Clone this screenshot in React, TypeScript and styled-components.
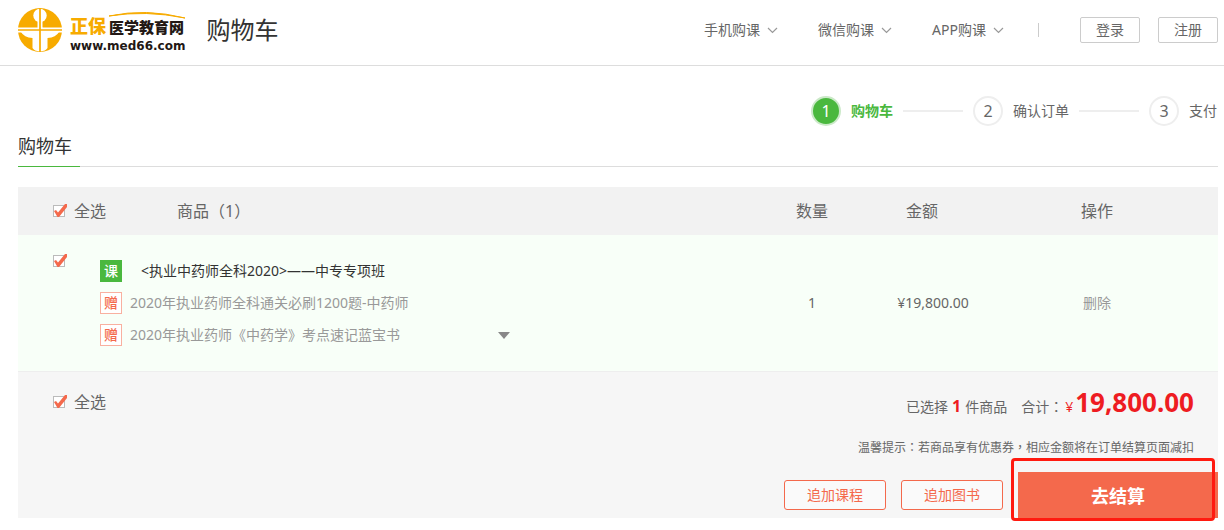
import React from "react";
import styled, { createGlobalStyle } from "styled-components";

const GlobalStyle = createGlobalStyle`
  * { box-sizing: border-box; }
  body {
    margin: 0;
    background: #fff;
    color: #666;
    font: 14px/20px "Noto Sans", "Noto Sans CJK SC", sans-serif;
  }
  h1, h2, p, ul { margin: 0; padding: 0; font-weight: normal; }
  ul { list-style: none; }
  a { color: inherit; text-decoration: none; }
  button { font-family: inherit; cursor: pointer; }
`;

const Header = styled.header`
  display: flex;
  align-items: center;
  justify-content: space-between;
  height: 66px;
  padding: 0 6px 5px 18px;
  border-bottom: 1px solid #ddd;
`;

const Brand = styled.div`
  display: flex;
  align-items: center;
`;

const LogoLink = styled.a`
  display: flex;
  align-items: center;
  gap: 8px;
`;

const Wordmark = styled.span`
  position: relative;
  display: flex;
  flex-direction: column;
`;

const Arc = styled.svg`
  position: absolute;
  left: 38px;
  top: 5px;
`;

const WordmarkName = styled.span`
  display: flex;
  align-items: baseline;
  gap: 3px;
  padding-top: 8px;
  font-family: "Noto Sans CJK SC", sans-serif;
  font-weight: 900;
  line-height: 22px;
`;

const Gold = styled.span`
  font-size: 18px;
  color: #f7ab00;
`;

const Dark = styled.span`
  font-size: 15px;
  color: #231815;
`;

const Domain = styled.span`
  font: bold 12px/16px "DejaVu Sans", sans-serif;
  color: #231815;
`;

const PageName = styled.h1`
  margin-left: 21px;
  font-size: 24px;
  line-height: 32px;
  color: #333;
`;

const Nav = styled.nav`
  display: flex;
  align-items: center;
`;

const NavList = styled.ul`
  display: flex;
  gap: 40px;
`;

const NavLink = styled.a`
  display: flex;
  align-items: center;
  gap: 7px;
`;

const Divider = styled.span`
  width: 1px;
  height: 14px;
  margin: 0 41px 0 34px;
  background: #ccc;
`;

const AccountButtons = styled.div`
  display: flex;
  gap: 18px;
`;

const AccountButton = styled.button`
  width: 60px;
  height: 26px;
  padding: 0;
  border: 1px solid #ccc;
  border-radius: 2px;
  background: #fff;
  color: #666;
  font-size: 14px;
  line-height: 24px;
`;

const Main = styled.main`
  padding: 30px 6px 12px 18px;
`;

const Steps = styled.ol`
  display: flex;
  justify-content: flex-end;
  gap: 10px;
  margin: 0;
  padding: 0 1px 0 0;
  list-style: none;
`;

const Step = styled.li<{ $active?: boolean }>`
  display: flex;
  align-items: center;
  gap: 10px;
  color: ${(p) => (p.$active ? "#4ab83e" : "#666")};
  font-weight: ${(p) => (p.$active ? "bold" : "normal")};

  &:not(:last-child)::after {
    content: "";
    width: 60px;
    height: 2px;
    background: #eee;
  }
`;

const StepNumber = styled.span<{ $active?: boolean }>`
  width: 30px;
  height: 30px;
  border: 2px solid ${(p) => (p.$active ? "#cbe9c8" : "#eee")};
  border-radius: 50%;
  background: ${(p) => (p.$active ? "#4ab83e" : "#fff")};
  color: ${(p) => (p.$active ? "#fff" : "#666")};
  font-size: 16px;
  font-weight: normal;
  line-height: 26px;
  text-align: center;
`;

const SectionTitle = styled.div`
  display: flex;
  margin-bottom: 20px;
  border-bottom: 1px solid #ddd;
`;

const SectionName = styled.h2`
  margin-bottom: -1px;
  padding-right: 8px;
  border-bottom: 1px solid #4ab83e;
  font-size: 18px;
  line-height: 40px;
  color: #333;
`;

const CartTable = styled.table`
  width: 100%;
  table-layout: fixed;
  border-collapse: collapse;
`;

const Col = styled.col<{ $width?: number }>`
  width: ${(p) => (p.$width ? `${p.$width}px` : "auto")};
`;

const HeadCell = styled.th<{ $align?: string; $indent?: number }>`
  height: 48px;
  padding: 0 0 0 ${(p) => p.$indent ?? 0}px;
  background: #f2f2f2;
  font-size: 16px;
  font-weight: normal;
  text-align: ${(p) => p.$align ?? "center"};
`;

const Cell = styled.td<{ $align?: string; $top?: boolean }>`
  padding: ${(p) => (p.$top ? "20px 0 0 35px" : "25px 0")};
  background: #f8fff8;
  text-align: ${(p) => p.$align ?? "center"};
  vertical-align: ${(p) => (p.$top ? "top" : "middle")};
`;

const CheckLabel = styled.label`
  display: inline-flex;
  align-items: center;
  gap: 9px;
  font-size: 16px;
  line-height: 24px;
`;

const CheckWrap = styled.span`
  position: relative;
  display: flex;
  width: 12px;
  height: 12px;

  svg {
    position: absolute;
    left: 0;
    top: -1px;
    display: none;
    pointer-events: none;
  }

  input:checked + svg {
    display: block;
  }
`;

const CheckInput = styled.input`
  appearance: none;
  width: 12px;
  height: 12px;
  margin: 0;
  border: 1px solid #bbb;
  background: #fff;
`;

const Goods = styled.ul`
  display: flex;
  flex-direction: column;
  gap: 10px;
  max-width: 410px;
`;

const GoodsItem = styled.li<{ $main?: boolean }>`
  display: flex;
  align-items: center;
  gap: ${(p) => (p.$main ? 19 : 8)}px;
  color: ${(p) => (p.$main ? "#333" : "#999")};
  white-space: nowrap;
`;

const Badge = styled.span<{ $main?: boolean }>`
  width: 22px;
  height: 22px;
  border: 1px solid ${(p) => (p.$main ? "#4ab83e" : "#f9b0a0")};
  background: ${(p) => (p.$main ? "#4ab83e" : "#fff")};
  color: ${(p) => (p.$main ? "#fff" : "#f4694c")};
  font-weight: 500;
  line-height: 20px;
  text-align: center;
`;

const ExpandButton = styled.button`
  display: flex;
  margin-left: auto;
  padding: 0;
  border: 0;
  background: none;
`;

const DeleteLink = styled.a`
  color: #999;
`;

const Footer = styled.section`
  display: flex;
  justify-content: space-between;
  align-items: flex-start;
  padding-left: 35px;
  border-top: 1px solid #eee;
  background: #f6f6f6;
`;

const SelectAll = styled.div`
  padding-top: 18px;
`;

const Summary = styled.div`
  display: flex;
  flex-direction: column;
  align-items: flex-end;
`;

const Totals = styled.p`
  display: flex;
  align-items: baseline;
  padding: 12px 24px 0 0;
  line-height: 36px;
`;

const Count = styled.strong`
  margin: 0 4px;
  color: #ee1c22;
  font-size: 16px;
`;

const TotalLabel = styled.span`
  margin-left: 14px;
`;

const Currency = styled.span`
  margin: 0 2px;
  color: #ee1c22;
`;

const Total = styled.strong`
  color: #ee1c22;
  font-size: 26px;
`;

const Punct = styled.span`
  font-family: "Noto Sans CJK TC", sans-serif;
`;

const Hint = styled.p`
  padding: 12px 24px 14px 0;
  font-size: 12px;
`;

const Actions = styled.div`
  display: flex;
  align-items: center;
  gap: 15px;
`;

const AddButton = styled.button`
  width: 102px;
  height: 30px;
  padding: 0;
  border: 1px solid #f4694c;
  border-radius: 3px;
  background: #fafafa;
  color: #f4694c;
  font-size: 14px;
  line-height: 28px;
`;

const CheckoutWrap = styled.div`
  position: relative;
`;

const CheckoutButton = styled.button`
  display: block;
  width: 200px;
  height: 46px;
  padding: 0;
  border: 0;
  background: #f4694c;
  color: #fff;
  font-size: 18px;
  font-weight: bold;
`;

const Highlight = styled.span`
  position: absolute;
  inset: -14px 3px -3px -7px;
  border: 3px solid #ff1a10;
  border-radius: 4px;
  pointer-events: none;
`;

function Emblem() {
  return (
    <svg width="44" height="44" viewBox="0 0 44 44" aria-hidden="true">
      <circle cx="22" cy="22" r="22" fill="#f7ab00" />
      <g fill="#fff">
        <circle cx="22" cy="7.500" r="6.700" />
        <path d="M19.500 13.500H24.500V19.500H44V24.500H19.500V19.500Z" />
        <path d="M0 19.500H24.500V24.500H0Z" />
        <path d="M3 24H41Q38 29.500 29.500 30V40Q28 43 22 43.500Q16 43 14.500 40V30Q6 29.500 3 24Z" />
      </g>
      <path d="M22 0V44M0 22H44" stroke="#f7ab00" strokeWidth="1.700" />
    </svg>
  );
}

function Chevron() {
  return (
    <svg width="11" height="7" viewBox="0 0 11 7" fill="none" stroke="#999" strokeWidth="1.200" aria-hidden="true">
      <path d="M1 1L5.500 5.500L10 1" />
    </svg>
  );
}

function Checkbox({ label }: { label?: string }) {
  return (
    <CheckWrap>
      <CheckInput type="checkbox" defaultChecked aria-label={label} />
      <svg width="14" height="13" viewBox="0 0 14 13" aria-hidden="true">
        <path d="M1 7L3 6L5 8.500L12 0H14V3L6 13H4.500Z" fill="#f4694c" />
      </svg>
    </CheckWrap>
  );
}

const navItems = ["手机购课", "微信购课", "APP购课"];
const steps = ["购物车", "确认订单", "支付"];

export default function App() {
  return (
    <>
      <GlobalStyle />
      <Header>
        <Brand>
          <LogoLink href="#">
            <Emblem />
            <Wordmark>
              <Arc width="78" height="8" viewBox="0 0 78 8" aria-hidden="true">
                <path d="M1 5Q38 -3 77 7Q38 -1 1 5Z" fill="#f7ab00" stroke="#f7ab00" strokeWidth="1" />
              </Arc>
              <WordmarkName>
                <Gold>正保</Gold>
                <Dark>医学教育网</Dark>
              </WordmarkName>
              <Domain>www.med66.com</Domain>
            </Wordmark>
          </LogoLink>
          <PageName>购物车</PageName>
        </Brand>
        <Nav>
          <NavList>
            {navItems.map((item) => (
              <li key={item}>
                <NavLink href="#">
                  {item}
                  <Chevron />
                </NavLink>
              </li>
            ))}
          </NavList>
          <Divider />
          <AccountButtons>
            <AccountButton>登录</AccountButton>
            <AccountButton>注册</AccountButton>
          </AccountButtons>
        </Nav>
      </Header>

      <Main>
        <Steps>
          {steps.map((step, i) => (
            <Step key={step} $active={i === 0}>
              <StepNumber $active={i === 0}>{i + 1}</StepNumber>
              {step}
            </Step>
          ))}
        </Steps>

        <SectionTitle>
          <SectionName>购物车</SectionName>
        </SectionTitle>

        <CartTable>
          <colgroup>
            <Col $width={82} />
            <Col $width={77} />
            <Col />
            <Col $width={156} />
            <Col $width={86} />
            <Col $width={242} />
          </colgroup>
          <thead>
            <tr>
              <HeadCell colSpan={2} $align="left" $indent={35}>
                <CheckLabel>
                  <Checkbox />
                  全选
                </CheckLabel>
              </HeadCell>
              <HeadCell $align="left">商品（1）</HeadCell>
              <HeadCell>数量</HeadCell>
              <HeadCell $align="left" $indent={16}>金额</HeadCell>
              <HeadCell>操作</HeadCell>
            </tr>
          </thead>
          <tbody>
            <tr>
              <Cell $align="left" $top>
                <Checkbox label="选择商品" />
              </Cell>
              <Cell colSpan={2} $align="left">
                <Goods>
                  <GoodsItem $main>
                    <Badge $main>课</Badge>
                    <a href="#">&lt;执业中药师全科2020&gt;——中专专项班</a>
                  </GoodsItem>
                  <GoodsItem>
                    <Badge>赠</Badge>
                    2020年执业药师全科通关必刷1200题-中药师
                  </GoodsItem>
                  <GoodsItem>
                    <Badge>赠</Badge>
                    2020年执业药师《中药学》考点速记蓝宝书
                    <ExpandButton aria-label="展开">
                      <svg width="12" height="7" viewBox="0 0 12 7" aria-hidden="true">
                        <path d="M0 0H12L6 7Z" fill="#888" />
                      </svg>
                    </ExpandButton>
                  </GoodsItem>
                </Goods>
              </Cell>
              <Cell>1</Cell>
              <Cell>¥19,800.00</Cell>
              <Cell>
                <DeleteLink href="#">删除</DeleteLink>
              </Cell>
            </tr>
          </tbody>
        </CartTable>

        <Footer>
          <SelectAll>
            <CheckLabel>
              <Checkbox />
              全选
            </CheckLabel>
          </SelectAll>
          <Summary>
            <Totals>
              已选择<Count>1</Count>件商品
              <TotalLabel>
                合计<Punct>：</Punct>
              </TotalLabel>
              <Currency>¥</Currency>
              <Total>19,800.00</Total>
            </Totals>
            <Hint>
              温馨提示<Punct>：</Punct>若商品享有优惠券<Punct>，</Punct>相应金额将在订单结算页面减扣
            </Hint>
            <Actions>
              <AddButton>追加课程</AddButton>
              <AddButton>追加图书</AddButton>
              <CheckoutWrap>
                <CheckoutButton>去结算</CheckoutButton>
                <Highlight />
              </CheckoutWrap>
            </Actions>
          </Summary>
        </Footer>
      </Main>
    </>
  );
}
